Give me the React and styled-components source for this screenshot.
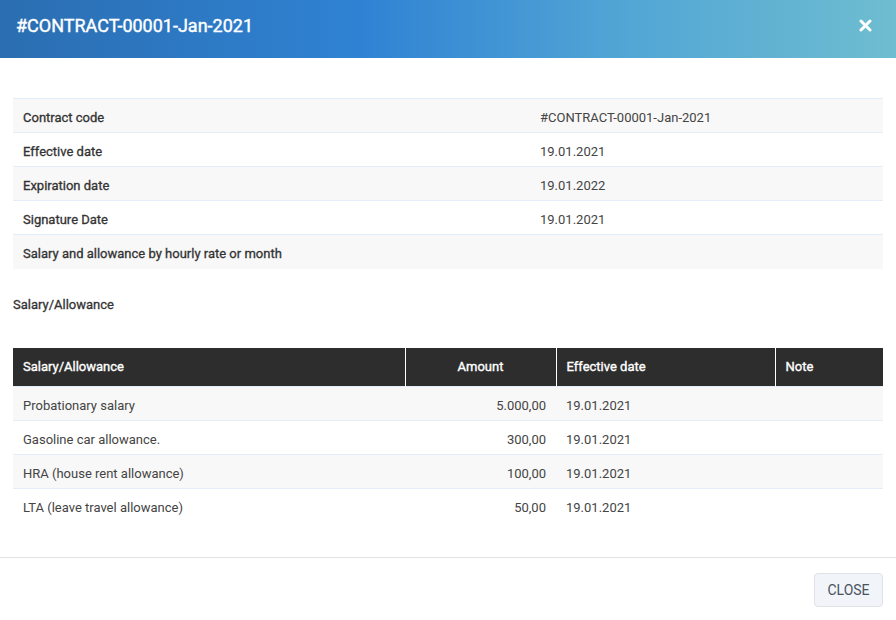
import React from "react";
import styled, { createGlobalStyle } from "styled-components";

const Global = createGlobalStyle`
  html, body { margin: 0; padding: 0; background: #fff; }
  body { font-family: Roboto, "Liberation Sans", Arial, sans-serif; color: #333; }
  * { box-sizing: border-box; }
`;

const Modal = styled.div`
  width: 896px;
  height: 620px;
  display: flex;
  flex-direction: column;
  background: #fff;
`;

const Header = styled.div`
  height: 58px;
  flex: none;
  display: flex;
  align-items: center;
  justify-content: space-between;
  padding: 0 16px 8px 16px;
  background: linear-gradient(90deg, #2b6eb1 0%, #2f82d3 40%, #52a6d5 70%, #6ebdd0 100%);
`;

const Title = styled.h1`
  margin: 0;
  font-size: 18px;
  font-weight: 400;
  color: #fff;
  -webkit-text-stroke: 0.4px #fff;
`;

const CloseX = styled.button`
  border: 0;
  background: none;
  padding: 0;
  width: 28px;
  height: 28px;
  display: flex;
  align-items: center;
  justify-content: center;
  margin-right: 1px;
  cursor: pointer;
`;

const Body = styled.div`
  flex: 1;
  padding: 40px 13px 0 13px;
`;

const Table = styled.table`
  width: 100%;
  border-collapse: collapse;
  table-layout: fixed;
  font-size: 13px;
  color: #333;
`;

const Row = styled.tr`
  background: ${(p) => (p.$odd ? "#f8f8f8" : "#fff")};
  border-top: 1px solid #e4eefa;
`;

const Cell = styled.td`
  height: 34px;
  padding: 4px 10px 0;
  text-align: ${(p) => p.$align || "left"};
  color: ${(p) => (p.$label ? "#333" : "#444")};
  -webkit-text-stroke: ${(p) => (p.$label ? "0.3px #333" : "0")};
  white-space: nowrap;
`;

const SectionLabel = styled.div`
  font-size: 13px;
  font-weight: 400;
  color: #333;
  -webkit-text-stroke: 0.3px #333;
  margin: 28px 0 35px;
  line-height: 16px;
`;

const HeadRow = styled.tr`
  background: #2d2d2d;
`;

const HeadCell = styled.th`
  height: 39px;
  padding: 0 10px 1px;
  color: #fff;
  font-weight: 400;
  -webkit-text-stroke: 0.35px #fff;
  font-size: 13px;
  text-align: ${(p) => p.$align || "left"};
  border-left: ${(p) => (p.$first ? "none" : "1px solid #fff")};
`;

const Footer = styled.div`
  flex: none;
  height: 63px;
  border-top: 1px solid #e3e3e3;
  display: flex;
  align-items: center;
  justify-content: flex-end;
  padding: 0 13px;
`;

const Button = styled.button`
  height: 34px;
  width: 69px;
  padding: 0;
  background: #f1f4f8;
  border: 1px solid #dfe3e8;
  border-radius: 4px;
  font-family: Roboto, "Liberation Sans", Arial, sans-serif;
  font-size: 14px;
  color: #4a5260;
  cursor: pointer;
  margin-top: 1px;
`;

const info = [
  ["Contract code", "#CONTRACT-00001-Jan-2021"],
  ["Effective date", "19.01.2021"],
  ["Expiration date", "19.01.2022"],
  ["Signature Date", "19.01.2021"],
  ["Salary and allowance by hourly rate or month", ""],
];

const salaries = [
  ["Probationary salary", "5.000,00", "19.01.2021", ""],
  ["Gasoline car allowance.", "300,00", "19.01.2021", ""],
  ["HRA (house rent allowance)", "100,00", "19.01.2021", ""],
  ["LTA (leave travel allowance)", "50,00", "19.01.2021", ""],
];

export default function App() {
  return (
    <>
      <Global />
      <Modal>
        <Header>
          <Title>#CONTRACT-00001-Jan-2021</Title>
          <CloseX aria-label="Close">
            <svg width="13" height="13" viewBox="0 0 13 13">
              <path d="M2 2 L11 11 M11 2 L2 11" stroke="#fff" strokeWidth="3" strokeLinecap="round" />
            </svg>
          </CloseX>
        </Header>
        <Body>
          <Table>
            <colgroup>
              <col style={{ width: "517px" }} />
              <col />
            </colgroup>
            <tbody>
              {info.map(([k, v], i) => (
                <Row key={k} $odd={i % 2 === 0}>
                  <Cell $label>{k}</Cell>
                  <Cell>{v}</Cell>
                </Row>
              ))}
            </tbody>
          </Table>
          <SectionLabel>Salary/Allowance</SectionLabel>
          <Table>
            <colgroup>
              <col style={{ width: "392px" }} />
              <col style={{ width: "151px" }} />
              <col style={{ width: "219px" }} />
              <col />
            </colgroup>
            <thead>
              <HeadRow>
                <HeadCell $first>Salary/Allowance</HeadCell>
                <HeadCell $align="center">Amount</HeadCell>
                <HeadCell>Effective date</HeadCell>
                <HeadCell>Note</HeadCell>
              </HeadRow>
            </thead>
            <tbody>
              {salaries.map(([n, a, d, note], i) => (
                <Row key={n} $odd={i % 2 === 0}>
                  <Cell>{n}</Cell>
                  <Cell $align="right">{a}</Cell>
                  <Cell>{d}</Cell>
                  <Cell>{note}</Cell>
                </Row>
              ))}
            </tbody>
          </Table>
        </Body>
        <Footer>
          <Button>CLOSE</Button>
        </Footer>
      </Modal>
    </>
  );
}
